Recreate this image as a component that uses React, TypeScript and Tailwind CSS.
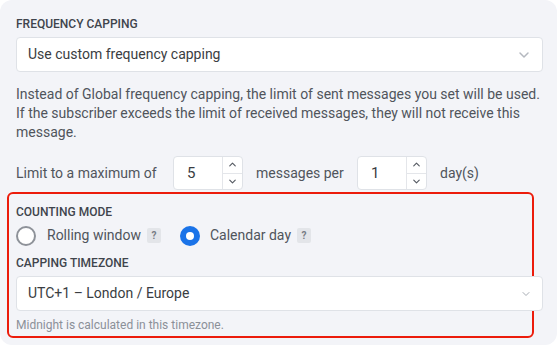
import { ChevronDown, ChevronUp } from 'lucide-react';

function SelectBox({ value, small }: { value: string; small?: boolean }) {
  return (
    <div className="flex h-[35px] w-[527px] items-center justify-between rounded-[4px] border border-[#dfe2e7] bg-white pl-[11px] pr-[10px]">
      <span className="text-[14px] text-[#3a3d42]">{value}</span>
      <ChevronDown
        className={small ? 'h-[12px] w-[12px] text-[#a6abb3]' : 'h-[16px] w-[16px] text-[#b4b8bf]'}
        strokeWidth={small ? 2 : 2.2}
      />
    </div>
  );
}

function NumberInput({ value }: { value: string }) {
  return (
    <div className="flex h-[34px] w-[70px] rounded-[4px] border border-[#dfe2e7] bg-white">
      <div className="flex flex-1 items-center pl-[13px] text-[15px] text-[#3a3d42]">{value}</div>
      <div className="flex w-[20px] flex-col border-l border-[#e4e6ea]">
        <div className="flex flex-1 items-center justify-center border-b border-[#e4e6ea]">
          <ChevronUp className="h-[11px] w-[11px] text-[#555a62]" strokeWidth={2.5} />
        </div>
        <div className="flex flex-1 items-center justify-center">
          <ChevronDown className="h-[11px] w-[11px] text-[#555a62]" strokeWidth={2.5} />
        </div>
      </div>
    </div>
  );
}

function Help() {
  return (
    <span className="ml-[6px] flex h-[15px] w-[14px] items-center justify-center rounded-[2px] bg-[#e3e5e9] text-[10px] font-bold text-[#777c84]">
      ?
    </span>
  );
}

function Label({ children }: { children: React.ReactNode }) {
  return <div className="text-[12px] font-medium uppercase text-[#3f444c]">{children}</div>;
}

export default function App() {
  return (
    <div className="h-[348px] w-[560px] bg-white font-['Roboto',sans-serif]">
      <div className="h-[345px] w-[557px] rounded-xl bg-[#f3f4f8] pl-[16px] pt-[15px]">
        <Label>Frequency capping</Label>
        <div className="mt-[4px]">
          <SelectBox value="Use custom frequency capping" />
        </div>

        <p className="mt-[13px] w-[535px] text-[14px] leading-[19px] text-[#50555c]">
          Instead of Global frequency capping, the limit of sent messages you set will be used. If
          the subscriber exceeds the limit of received messages, they will not receive this message.
        </p>

        <div className="mt-[14px] flex items-center text-[14px] text-[#50555c]">
          <span className="w-[157px]">Limit to a maximum of</span>
          <NumberInput value="5" />
          <span className="ml-[13px] w-[101px]">messages per</span>
          <NumberInput value="1" />
          <span className="ml-[13px]">day(s)</span>
        </div>

        <div className="-ml-[9px] mt-[2px] h-[146px] w-[527px] rounded-[6px] border-[2.5px] border-[#ec1c0b] pl-[7px] pt-[9px]">
          <Label>Counting mode</Label>
          <div className="mt-[4px] flex items-center text-[14px] text-[#50555c]">
            <span className="h-[20px] w-[20px] rounded-full border-2 border-[#8e9299] bg-white" />
            <span className="ml-[11px]">Rolling window</span>
            <Help />
            <span className="ml-[19px] flex h-[20px] w-[20px] items-center justify-center rounded-full bg-[#1a73e8]">
              <span className="h-[8px] w-[8px] rounded-full bg-white" />
            </span>
            <span className="ml-[10px]">Calendar day</span>
            <Help />
          </div>
          <div className="mt-[8px]">
            <Label>Capping timezone</Label>
          </div>
          <div className="mt-[4px]">
            <SelectBox value="UTC+1 – London / Europe" small />
          </div>
          <div className="mt-[5px] text-[12px] text-[#8b9098]">Midnight is calculated in this timezone.</div>
        </div>
      </div>
    </div>
  );
}
